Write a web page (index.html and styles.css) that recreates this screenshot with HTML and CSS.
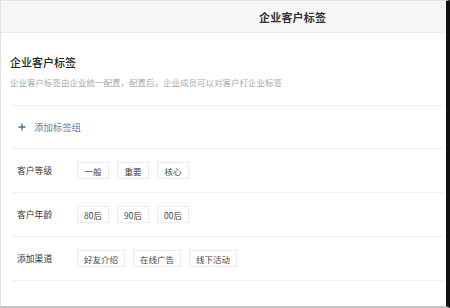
FILE: index.html
```html
<!DOCTYPE html>
<html lang="zh">
<head>
    <meta charset="UTF-8">
    <meta name="viewport" content="width=device-width, initial-scale=1.0">
    <title>企业客户标签</title>
    <link rel="stylesheet" href="styles.css">
</head>
<body>
    <div class="page">
        <header class="topbar">
            <span class="topbar-title">企业客户标签</span>
        </header>

        <section class="intro">
            <h1>企业客户标签</h1>
            <p>企业客户标签由企业统一配置，配置后，企业成员可以对客户打企业标签</p>
        </section>

        <div class="rows">
            <div class="row row-add">
                <svg class="plus" viewBox="0 0 8 8" width="8" height="8">
                    <path d="M4 0.5V7.5M0.5 4H7.5" stroke="currentColor" stroke-width="1.3" fill="none"/>
                </svg>
                <span>添加标签组</span>
            </div>

            <div class="row">
                <span class="row-label">客户等级</span>
                <div class="tags">
                    <span class="tag">一般</span>
                    <span class="tag">重要</span>
                    <span class="tag">核心</span>
                </div>
            </div>

            <div class="row">
                <span class="row-label">客户年龄</span>
                <div class="tags">
                    <span class="tag">80后</span>
                    <span class="tag">90后</span>
                    <span class="tag">00后</span>
                </div>
            </div>

            <div class="row">
                <span class="row-label">添加渠道</span>
                <div class="tags">
                    <span class="tag">好友介绍</span>
                    <span class="tag">在线广告</span>
                    <span class="tag">线下活动</span>
                </div>
            </div>
        </div>
    </div>
</body>
</html>
```

FILE: styles.css
```css
* {
    box-sizing: border-box;
    margin: 0;
    padding: 0;
    font-family: "Noto Sans CJK SC", "Noto Sans", sans-serif;
}

body {
    background: #fff;
    width: 450px;
    height: 308px;
    overflow: hidden;
}

.page {
    width: 450px;
    height: 308px;
    background: #fff;
    border-left: 1px solid #e2e2e2;
    border-right: 4px solid #111;
    border-bottom: 2px solid #c4c4c4;
    border-top: 1px solid #e4e4e4;
}

.topbar {
    height: 32px;
    background: #f6f6f6;
    border-bottom: 1px solid #ececec;
    padding-left: 258px;
    display: flex;
    align-items: center;
}

.topbar-title {
    font-size: 11px;
    font-weight: 600;
    color: #333;
    letter-spacing: 0.2px;
}

.intro {
    padding: 21px 0 0 9px;
    height: 72px;
}

.intro h1 {
    font-size: 11px;
    font-weight: 500;
    color: #222;
    line-height: 16px;
}

.intro p {
    margin-top: 6px;
    font-size: 8.5px;
    color: #a8a8a8;
    line-height: 12px;
}

.rows {
    margin-left: 11px;
    margin-right: 2px;
    border-top: 1px solid #efefef;
}

.row {
    display: flex;
    align-items: center;
    height: 44px;
    padding-left: 5px;
    border-bottom: 1px solid #efefef;
}

.row-add {
    height: 43px;
    color: #5589b2;
    font-size: 9.4px;
}

.row-add .plus {
    color: #3c78a8;
    margin: 0 8px 0 1px;
}

.row-label {
    width: 60px;
    font-size: 8.8px;
    color: #333;
}

.tags {
    display: flex;
    gap: 8px;
}

.tag {
    min-width: 32px;
    height: 17px;
    padding: 0 6px;
    display: flex;
    align-items: center;
    justify-content: center;
    font-size: 8.5px;
    color: #444;
    background: #fff;
    border: 1px solid #ececec;
    box-shadow: 0 0 1px rgba(0, 0, 0, 0.06);
}
```
